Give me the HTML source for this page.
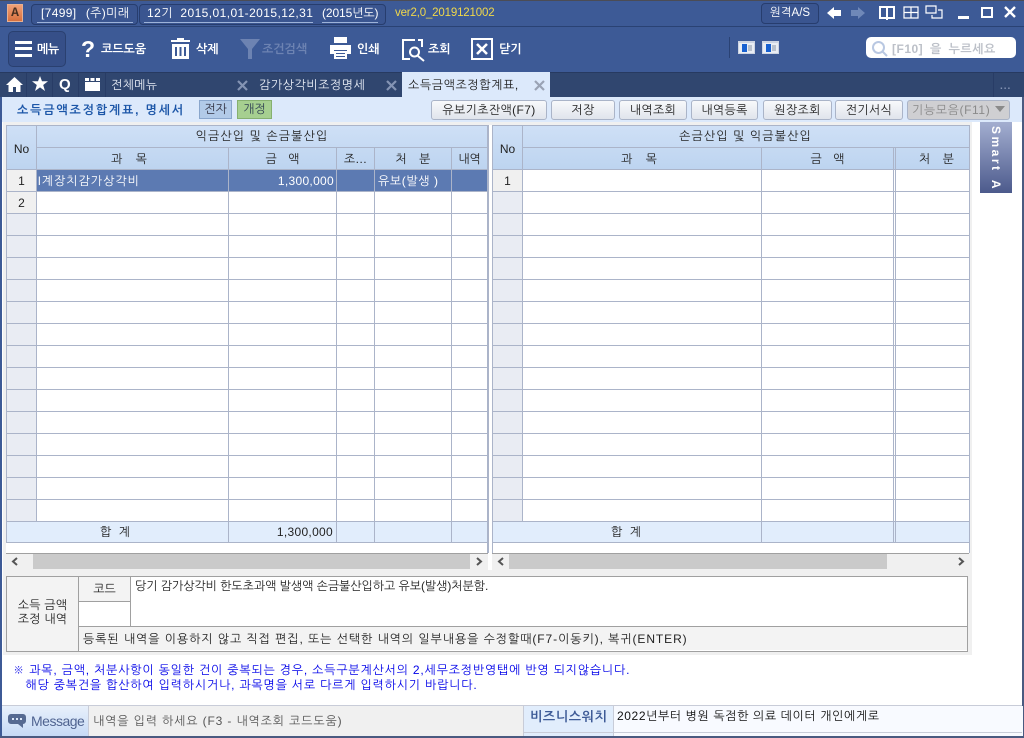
<!DOCTYPE html>
<html lang="ko"><head><meta charset="utf-8"><title>소득금액조정합계표</title>
<style>
html,body{margin:0;padding:0;background:#fff}
#p{position:relative;width:1024px;height:738px;overflow:hidden;background:#fff;font:12px/14px "Liberation Sans","NanumGothic","Noto Sans CJK KR",sans-serif;color:#222}
#p div,#p span,#p svg{position:absolute;display:block}
.t{white-space:pre}
.c{text-align:center}
.w{color:#fff;font-weight:bold}
.btn{top:100px;height:18px;line-height:18px;text-align:center;border:1px solid #aab4c8;border-radius:3px;background:linear-gradient(#f8f9fb,#e0e4ec);color:#222;white-space:pre;letter-spacing:.35px}
.hd{background:linear-gradient(#cfe0f6,#bdd4f0);border:0 solid #a9b3c9}
.l{background:#abb4c9}
</style></head><body><div id="p">
<div style="left:0;top:0;width:1024px;height:1px;background:#4b4c55"></div>
<div style="left:0;top:1px;width:1024px;height:71px;background:#3d5a96"></div>
<div style="left:0;top:26px;width:1024px;height:1px;background:#2a4274"></div>
<div style="left:0;top:72px;width:1024px;height:25px;background:#30466f"></div>
<div style="left:0;top:72px;width:1024px;height:1px;background:#273a61"></div>
<div style="left:0;top:97px;width:1024px;height:25px;background:#dce9fb"></div>
<div style="left:0;top:97px;width:2px;height:641px;background:#3d5a96"></div>
<div style="left:1022px;top:97px;width:2px;height:641px;background:#4a5a80"></div>
<div style="left:0;top:736px;width:1024px;height:2px;background:#4a5a80"></div>

<div style="left:7px;top:4px;width:14px;height:16px;background:linear-gradient(#f0a078,#d8703e);border:1px solid #e8b090"></div>
<div class="t c" style="left:8px;top:6px;width:14px;height:14px;font:bold 13px/14px 'Liberation Mono',monospace;color:#4a3020">A</div>

<div style="left:31px;top:4px;width:105px;height:19px;border:1px solid #273d6e;border-radius:4px;background:#3a5590"></div>
<div class="t" style="left:41px;top:6px;color:#fff;word-spacing:1px;letter-spacing:.35px">[7499]  (주)미래</div>
<div style="left:37px;top:22px;width:96px;height:1px;background:#9db2d8"></div>
<div style="left:139px;top:4px;width:245px;height:19px;border:1px solid #273d6e;border-radius:4px;background:#3a5590"></div>
<div class="t" style="left:147px;top:6px;color:#fff;letter-spacing:.42px">12기  2015,01,01-2015,12,31</div>
<div class="t" style="left:322px;top:6px;color:#fff;letter-spacing:-.1px">(2015년도)</div>
<div style="left:144px;top:22px;width:169px;height:1px;background:#9db2d8"></div>
<div style="left:322px;top:22px;width:56px;height:1px;background:#9db2d8"></div>
<div class="t" style="left:395px;top:6px;color:#f0d84a;font-size:11.5px;letter-spacing:-.17px">ver2,0_2019121002</div>

<div class="t c" style="left:761px;top:3px;width:56px;height:19px;border:1px solid #273d6e;border-radius:4px;background:#3a5590;color:#fff;line-height:19px;font-size:11.5px">원격A/S</div>
<svg style="left:826px;top:5px" width="16" height="16" viewBox="0 0 16 16"><path d="M1 8L8 2V5H15V11H8V14Z" fill="#fff"/></svg>
<svg style="left:850px;top:5px" width="16" height="16" viewBox="0 0 16 16"><path d="M15 8L8 2V5H1V11H8V14Z" fill="#6f88b8"/></svg>
<svg style="left:878px;top:5px" width="18" height="16" viewBox="0 0 18 16" fill="none" stroke="#fff" stroke-width="2"><path d="M2 2H16V13H2ZM9 2V15"/></svg>
<svg style="left:903px;top:6px" width="16" height="13" viewBox="0 0 16 13" fill="none" stroke="#fff" stroke-width="1.2"><path d="M1 1H15V12H1ZM1 6.500H15M8 1V12"/></svg>
<svg style="left:925px;top:5px" width="18" height="14" viewBox="0 0 18 14" fill="none" stroke="#fff" stroke-width="1.2"><path d="M1 1H11V8H1ZM13 5H17V13H7V10"/></svg>
<div style="left:958px;top:16px;width:11px;height:3px;background:#fff"></div>
<div style="left:981px;top:7px;border:2px solid #fff;width:8px;height:7px"></div>
<svg style="left:1004px;top:6px" width="12" height="12" viewBox="0 0 12 12" stroke="#fff" stroke-width="2.400"><path d="M1 1L11 11M11 1L1 11"/></svg>

<div style="left:8px;top:31px;width:56px;height:34px;border:1px solid #2a4070;border-radius:5px;background:#364f88"></div>
<svg style="left:15px;top:41px" width="18" height="17" viewBox="0 0 18 17" fill="#fff"><rect width="17" height="3"/><rect y="6" width="17" height="3"/><rect y="13" width="17" height="3"/></svg>
<div class="t w" style="left:37px;top:42px;letter-spacing:-.4px">메뉴</div>
<div class="t" style="left:81px;top:37px;font:bold 23px/24px 'Liberation Sans',sans-serif;color:#fff">?</div>
<div class="t w" style="left:101px;top:42px">코드도움</div>
<svg style="left:171px;top:37px" width="19" height="23" viewBox="0 0 19 23" fill="#fff"><path d="M6 3V1H13V3H19V5H0V3ZM1 7H18V22H1ZM4 10V19H6V10ZM8.500 10V19H10.500V10ZM13 10V19H15V10Z" fill-rule="evenodd"/></svg>
<div class="t w" style="left:196px;top:42px">삭제</div>
<svg style="left:240px;top:39px" width="20" height="20" viewBox="0 0 20 20"><path d="M0 0H20L12 10V20H8V10Z" fill="#6d83b2"/></svg>
<div class="t" style="left:262px;top:42px;color:#6d83b2;font-weight:bold">조건검색</div>
<svg style="left:329px;top:37px" width="23" height="23" viewBox="0 0 23 23" fill="#fff"><rect x="5" y="0" width="13" height="6"/><path d="M1 8H22V17H18V13H5V17H1Z"/><path d="M5 14H18V22H5ZM7 16V17H16V16ZM7 19V20H16V19Z" fill-rule="evenodd"/></svg>
<div class="t w" style="left:357px;top:42px">인쇄</div>
<svg style="left:401px;top:38px" width="24" height="24" viewBox="0 0 24 24" fill="none" stroke="#fff"><path d="M14 2H2V21H9M17 2H21V9" stroke-width="2"/><circle cx="13.500" cy="14" r="4.500" stroke-width="2"/><path d="M17 18L23 23" stroke-width="2"/></svg>
<div class="t w" style="left:428px;top:42px">조회</div>
<svg style="left:471px;top:38px" width="22" height="22" viewBox="0 0 22 22" fill="none" stroke="#fff"><rect x="1" y="1" width="20" height="20" stroke-width="2"/><path d="M6 6L16 16M16 6L6 16" stroke-width="2.600"/></svg>
<div class="t w" style="left:499px;top:42px">닫기</div>

<div style="left:729px;top:37px;width:1px;height:21px;background:#2a4274"></div>
<svg style="left:738px;top:41px" width="17" height="13" viewBox="0 0 17 13"><rect width="17" height="13" fill="#cdd4e2"/><rect x="1" y="2" width="15" height="10" fill="#e9edf4"/><rect x="4" y="3" width="5" height="8" fill="#1760d0"/><rect x="10" y="4" width="4" height="6" fill="#b8c0cc"/></svg>
<svg style="left:762px;top:41px" width="17" height="13" viewBox="0 0 17 13"><rect width="17" height="13" fill="#cdd4e2"/><rect x="1" y="2" width="15" height="10" fill="#e9edf4"/><rect x="4" y="3" width="5" height="8" fill="#1760d0"/><rect x="10" y="4" width="4" height="6" fill="#b8c0cc"/></svg>
<div style="left:866px;top:37px;width:150px;height:21px;background:#fff;border-radius:5px"></div>
<svg style="left:871px;top:40px" width="18" height="18" viewBox="0 0 18 18" fill="none" stroke="#b9c8e2" stroke-width="2"><circle cx="7.500" cy="7.500" r="5.500"/><path d="M11.500 11.500L16 16"/></svg>
<div class="t" style="left:892px;top:42px;color:#bcc0c8;font-weight:bold;word-spacing:3px;letter-spacing:.5px">[F10] 을 누르세요</div>

<svg style="left:6px;top:77px" width="17" height="15" viewBox="0 0 17 15" fill="#fff"><path d="M8.500 0L17 8H14.500V15H10V10H7V15H2.500V8H0Z"/></svg>
<div style="left:26px;top:73px;width:1px;height:24px;background:#283c66"></div>
<svg style="left:32px;top:76px" width="16" height="15" viewBox="0 0 16 15"><path d="M8 0L10 5.300H16L11.200 9L13 15L8 11.400L3 15L4.800 9L0 5.300H6Z" fill="#fff"/></svg>
<div style="left:52px;top:73px;width:1px;height:24px;background:#283c66"></div>
<div class="t" style="left:59px;top:76px;font:bold 15px/17px 'Liberation Sans',sans-serif;color:#fff">Q</div>
<div style="left:78px;top:73px;width:1px;height:24px;background:#283c66"></div>
<svg style="left:85px;top:78px" width="15" height="13" viewBox="0 0 15 13" fill="#fff"><path d="M0 4H15V13H0ZM0 0H4V3H0ZM5.500 0H9.500V3H5.500ZM11 0H15V3H11Z"/></svg>
<div style="left:105px;top:73px;width:1px;height:24px;background:#283c66"></div>
<div class="t" style="left:111px;top:78px;color:#e8edf6;letter-spacing:.3px">전체메뉴</div>
<svg style="left:237px;top:80px" width="11" height="11" viewBox="0 0 11 11" stroke="#8494b4" stroke-width="2.200"><path d="M1 1L10 10M10 1L1 10"/></svg>
<div class="t" style="left:259px;top:78px;color:#e8edf6;letter-spacing:.55px">감가상각비조정명세</div>
<svg style="left:386px;top:80px" width="11" height="11" viewBox="0 0 11 11" stroke="#8494b4" stroke-width="2.200"><path d="M1 1L10 10M10 1L1 10"/></svg>
<div style="left:402px;top:72px;width:148px;height:25px;background:#dce9fb"></div>
<div class="t" style="left:408px;top:78px;color:#222;letter-spacing:.6px">소득금액조정합계표,</div>
<svg style="left:534px;top:80px" width="11" height="11" viewBox="0 0 11 11" stroke="#9aa3b4" stroke-width="2.200"><path d="M1 1L10 10M10 1L1 10"/></svg>
<div style="left:993px;top:73px;width:1px;height:24px;background:#283c66"></div>
<div class="t" style="left:1000px;top:80px;color:#8494b4;font-size:10px;letter-spacing:1px;font-weight:bold">...</div>

<div class="t" style="left:17px;top:103px;color:#1c56a8;font-weight:bold;letter-spacing:1.85px">소득금액조정합계표, 명세서</div>
<div class="t c" style="left:199px;top:100px;width:31px;height:17px;line-height:17px;background:#b2cae8;border:1px solid #8aa6cc;color:#334">전자</div>
<div class="t c" style="left:237px;top:100px;width:33px;height:17px;line-height:17px;background:#a6cf90;border:1px solid #86b070;color:#345">개정</div>
<div class="btn" style="left:431px;width:114px">유보기초잔액(F7)</div>
<div class="btn" style="left:551px;width:62px">저장</div>
<div class="btn" style="left:619px;width:66px">내역조회</div>
<div class="btn" style="left:691px;width:65px">내역등록</div>
<div class="btn" style="left:763px;width:67px">원장조회</div>
<div class="btn" style="left:835px;width:66px">전기서식</div>
<div class="btn" style="left:907px;width:101px;background:#cfcfd2;color:#8a8a8a;text-align:left;text-indent:4px;letter-spacing:.6px">기능모음(F11)</div>
<svg style="left:995px;top:106px" width="10" height="6" viewBox="0 0 10 6"><path d="M0 0H10L5 6Z" fill="#8a8a8a"/></svg>

<div style="left:3px;top:122px;width:969px;height:533px;background:#f0f0f0"></div>
<div style="left:488px;top:125px;width:4px;height:445px;background:#fff"></div>

<div style="left:6px;top:125px;width:482px;height:428px;background:#fff;border-bottom:1px solid #a0a0a0"></div>
<div style="left:492px;top:125px;width:477px;height:428px;background:#fff;border-bottom:1px solid #a0a0a0"></div>

<div class="hd" style="left:7px;top:125px;width:480px;height:44px"></div>
<div class="hd" style="left:493px;top:125px;width:476px;height:44px"></div>
<div style="left:7px;top:170px;width:30px;height:352px;background:#e9ecf3"></div>
<div style="left:493px;top:170px;width:29px;height:352px;background:#e9ecf3"></div>
<div style="left:37px;top:170px;width:450px;height:21px;background:#5c7ab2"></div>
<div style="left:7px;top:170px;width:30px;height:22px;background:#f0f0f0"></div>
<div style="left:7px;top:192px;width:30px;height:22px;background:#f0f0f0"></div>
<div style="left:493px;top:170px;width:29px;height:22px;background:#f0f0f0"></div>
<div style="left:7px;top:522px;width:480px;height:20px;background:#e1edfc"></div>
<div style="left:493px;top:522px;width:476px;height:20px;background:#e1edfc"></div>

<div style="left:7px;top:169px;width:480px;height:374px;background:repeating-linear-gradient(to bottom,#abb4c9 0,#abb4c9 1px,transparent 1px,transparent 22px);background-size:100% 352px;background-repeat:no-repeat"></div>
<div class="l" style="left:7px;top:521px;width:480px;height:1px"></div>
<div class="l" style="left:7px;top:542px;width:480px;height:1px"></div>
<div style="left:493px;top:169px;width:476px;height:374px;background:repeating-linear-gradient(to bottom,#abb4c9 0,#abb4c9 1px,transparent 1px,transparent 22px);background-size:100% 352px;background-repeat:no-repeat"></div>
<div class="l" style="left:493px;top:521px;width:476px;height:1px"></div>
<div class="l" style="left:493px;top:542px;width:476px;height:1px"></div>
<div class="l" style="left:37px;top:147px;width:450px;height:1px"></div>
<div class="l" style="left:522px;top:147px;width:447px;height:1px"></div>
<div class="l" style="left:6px;top:125px;width:482px;height:1px"></div>
<div class="l" style="left:492px;top:125px;width:477px;height:1px"></div>

<div class="l" style="left:6px;top:125px;width:1px;height:418px"></div>
<div class="l" style="left:36px;top:125px;width:1px;height:396px"></div>
<div class="l" style="left:228px;top:148px;width:1px;height:395px"></div>
<div class="l" style="left:336px;top:148px;width:1px;height:395px"></div>
<div class="l" style="left:374px;top:148px;width:1px;height:395px"></div>
<div class="l" style="left:451px;top:148px;width:1px;height:395px"></div>
<div class="l" style="left:487px;top:125px;width:2px;height:428px"></div>
<div class="l" style="left:492px;top:125px;width:1px;height:428px"></div>
<div class="l" style="left:522px;top:125px;width:1px;height:396px"></div>
<div class="l" style="left:761px;top:148px;width:1px;height:395px"></div>
<div class="l" style="left:893px;top:148px;width:1px;height:395px"></div>
<div class="l" style="left:895px;top:148px;width:1px;height:395px"></div>
<div class="l" style="left:969px;top:125px;width:1px;height:428px"></div>

<div class="t c" style="left:37px;top:129px;width:450px;letter-spacing:1.1px">익금산입 및 손금불산입</div>
<div class="t c" style="left:7px;top:142px;width:29px">No</div>
<div class="t c" style="left:37px;top:152px;width:184px;word-spacing:10px">과 목</div>
<div class="t c" style="left:229px;top:152px;width:107px;word-spacing:8px">금 액</div>
<div class="t c" style="left:337px;top:152px;width:37px">조…</div>
<div class="t c" style="left:375px;top:152px;width:76px;word-spacing:9px">처 분</div>
<div class="t c" style="left:452px;top:152px;width:35px">내역</div>
<div class="t c" style="left:7px;top:174px;width:29px">1</div>
<div class="t c" style="left:7px;top:196px;width:29px">2</div>
<div class="t" style="left:38px;top:174px;color:#fff;letter-spacing:1px">l계장치감가상각비</div>
<div class="t" style="left:229px;top:174px;width:105px;text-align:right;color:#fff;letter-spacing:.3px">1,300,000</div>
<div class="t" style="left:378px;top:174px;color:#fff;letter-spacing:.6px">유보(발생 )</div>
<div class="t c" style="left:7px;top:525px;width:216px;word-spacing:4px">합 계</div>
<div class="t" style="left:229px;top:525px;width:104px;text-align:right;letter-spacing:.3px">1,300,000</div>

<div class="t c" style="left:522px;top:129px;width:447px;letter-spacing:1.1px">손금산입 및 익금불산입</div>
<div class="t c" style="left:493px;top:142px;width:29px">No</div>
<div class="t c" style="left:523px;top:152px;width:232px;word-spacing:10px">과 목</div>
<div class="t c" style="left:762px;top:152px;width:131px;word-spacing:8px">금 액</div>
<div class="t c" style="left:900px;top:152px;width:73px;word-spacing:9px">처 분</div>
<div class="t c" style="left:493px;top:174px;width:29px">1</div>
<div class="t c" style="left:523px;top:525px;width:206px;word-spacing:4px">합 계</div>

<div style="left:33px;top:554px;width:437px;height:15px;background:#cacaca"></div>
<div style="left:509px;top:554px;width:378px;height:15px;background:#cacaca"></div>
<svg style="left:11px;top:557px" width="7" height="9" viewBox="0 0 7 9" fill="none" stroke="#555" stroke-width="2"><path d="M6 1L2 4.500L6 8"/></svg>
<svg style="left:476px;top:557px" width="7" height="9" viewBox="0 0 7 9" fill="none" stroke="#555" stroke-width="2"><path d="M1 1L5 4.500L1 8"/></svg>
<svg style="left:497px;top:557px" width="7" height="9" viewBox="0 0 7 9" fill="none" stroke="#555" stroke-width="2"><path d="M6 1L2 4.500L6 8"/></svg>
<svg style="left:958px;top:557px" width="7" height="9" viewBox="0 0 7 9" fill="none" stroke="#555" stroke-width="2"><path d="M1 1L5 4.500L1 8"/></svg>

<div style="left:6px;top:576px;width:960px;height:74px;border:1px solid #a0a0a0;background:#fff"></div>
<div style="left:7px;top:577px;width:71px;height:74px;background:#f3f3f3"></div>
<div style="left:78px;top:576px;width:1px;height:75px;background:#a0a0a0"></div>
<div style="left:79px;top:577px;width:51px;height:24px;background:#f3f3f3"></div>
<div style="left:130px;top:576px;width:1px;height:51px;background:#a0a0a0"></div>
<div style="left:79px;top:601px;width:52px;height:1px;background:#a0a0a0"></div>
<div style="left:79px;top:626px;width:888px;height:1px;background:#a0a0a0"></div>
<div style="left:79px;top:627px;width:888px;height:23px;background:#f3f3f3"></div>
<div class="t c" style="left:7px;top:598px;width:71px;line-height:14px;letter-spacing:.2px">소득 금액
조정 내역</div>
<div class="t c" style="left:79px;top:582px;width:51px">코드</div>
<div class="t" style="left:135px;top:579px;letter-spacing:-.05px">당기 감가상각비 한도초과액 발생액 손금불산입하고 유보(발생)처분함.</div>
<div class="t" style="left:83px;top:632px;letter-spacing:.92px">등록된 내역을 이용하지 않고 직접 편집, 또는 선택한 내역의 일부내용을 수정할때(F7-이동키), 복귀(ENTER)</div>

<div style="left:980px;top:122px;width:32px;height:71px;background:linear-gradient(#a3aed0,#4c5a8c)"></div>
<div class="t" style="left:996px;top:126px;width:0;height:0;transform:rotate(90deg);transform-origin:0 0;color:#fff;font-weight:bold;letter-spacing:2.500px;word-spacing:2px"><span style="left:0;top:-7px">Smart A</span></div>

<div class="t" style="left:13px;top:663px;color:#0000e8;line-height:15px;letter-spacing:.8px">※ 과목, 금액, 처분사항이 동일한 건이 중복되는 경우, 소득구분계산서의 2,세무조정반영탭에 반영 되지않습니다.
   해당 중복건을 합산하여 입력하시거나, 과목명을 서로 다르게 입력하시기 바랍니다.</div>

<div style="left:2px;top:705px;width:1020px;height:1px;background:#c8ccd8"></div>
<div style="left:2px;top:706px;width:86px;height:30px;background:linear-gradient(#e8f0fb,#c6daf6)"></div>
<div style="left:88px;top:706px;width:435px;height:30px;background:#f0f0f0;border-left:1px solid #c8ccd8"></div>
<svg style="left:8px;top:714px" width="18" height="15" viewBox="0 0 18 15"><path d="M3 0H15A3 3 0 0 1 18 3V7A3 3 0 0 1 15 10V14L10 10H3A3 3 0 0 1 0 7V3A3 3 0 0 1 3 0Z" fill="#566a92"/><g fill="#dce8f8"><rect x="4" y="4" width="2" height="2"/><rect x="8" y="4" width="2" height="2"/><rect x="12" y="4" width="2" height="2"/></g></svg>
<div class="t" style="left:31px;top:714px;color:#4f6390;font-size:14px;letter-spacing:-.5px;line-height:15px">Message</div>
<div class="t" style="left:93px;top:714px;color:#555;letter-spacing:.85px">내역을 입력 하세요 (F3 - 내역조회 코드도움)</div>
<div style="left:523px;top:706px;width:1px;height:30px;background:#c8ccd8"></div>
<div style="left:524px;top:706px;width:89px;height:30px;background:#e1edfc"></div>
<div style="left:613px;top:706px;width:409px;height:30px;background:#f8faff;border-left:1px solid #c8ccd8"></div>
<div style="left:524px;top:732px;width:498px;height:1px;background:#c8ccd8"></div>
<div class="t" style="left:530px;top:710px;color:#3d5a96;font-weight:bold;font-size:13px;letter-spacing:.7px">비즈니스워치</div>
<div class="t" style="left:617px;top:709px;color:#111;letter-spacing:.6px">2022년부터 병원 독점한 의료 데이터 개인에게로</div>
</div></body></html>
